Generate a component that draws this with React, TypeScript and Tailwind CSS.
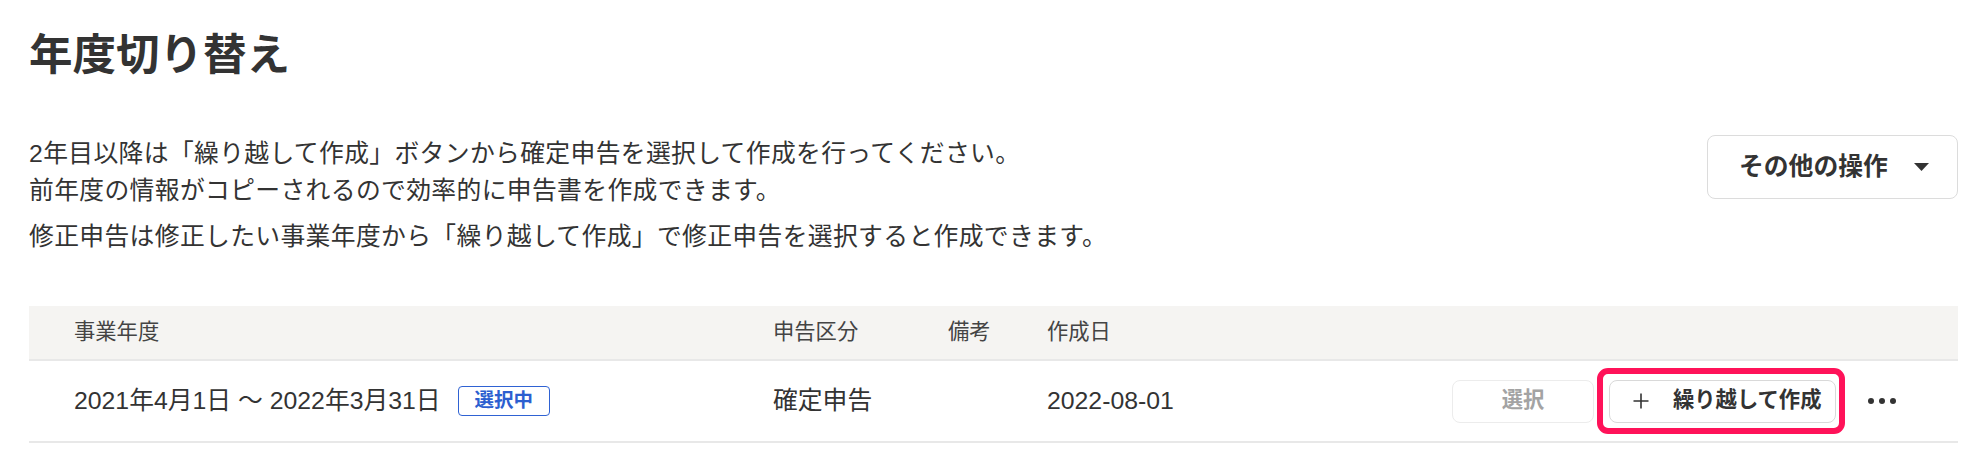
export default function App() {
  return (
    <div className="min-h-[450px] w-[1970px] bg-white pl-[29px] pr-[12px] font-['Liberation_Sans','Noto_Sans_CJK_JP',sans-serif] text-[#333]">
      <h1 className="pt-[25px] text-[43.5px] font-bold leading-[60px]">年度切り替え</h1>

      <div className="mt-[50px] flex items-start justify-between">
        <div className="text-[24.8px] leading-[37px] tracking-[0.35px]">
          <p>
            2年目以降は「繰り越して作成」ボタンから確定申告を選択して作成を行ってください。
            <br />
            前年度の情報がコピーされるので効率的に申告書を作成できます。
          </p>
          <p className="mt-[9px]">
            修正申告は修正したい事業年度から「繰り越して作成」で修正申告を選択すると作成できます。
          </p>
        </div>
        <button className="flex h-[64px] w-[251px] items-center rounded-[8px] border border-[#dcdcdc] bg-white pl-[31px] pr-[28px] text-[24.8px] font-bold text-[#333]">
          <span>その他の操作</span>
          <svg className="ml-auto" width="15" height="8" viewBox="0 0 15 8">
            <path d="M0 0H15L7.5 8Z" fill="#333" />
          </svg>
        </button>
      </div>

      <div className="mt-[51px]">
        <div className="flex h-[55px] items-center border-b-2 border-[#e8e8e8] bg-[#f5f4f2] pl-[45px] text-[21.3px] text-[#444]">
          <div className="w-[699px]">事業年度</div>
          <div className="w-[175px]">申告区分</div>
          <div className="w-[99px]">備考</div>
          <div className="flex-1">作成日</div>
        </div>

        <div className="flex h-[82px] items-center border-b-2 border-[#e8e8e8] pl-[45px] pr-[50px] text-[24.8px] text-[#333]">
          <div className="flex w-[699px] items-center">
            <span>2021年4月1日 〜 2022年3月31日</span>
            <span className="ml-[17px] flex h-[30px] w-[92px] items-center justify-center rounded-[4px] border-[1.5px] border-[#2f62d3] text-[19.5px] font-bold text-[#2c5fd0]">
              選択中
            </span>
          </div>
          <div className="w-[175px]">確定申告</div>
          <div className="w-[99px]"></div>
          <div className="flex-1">2022-08-01</div>

          <div className="flex items-center">
            <button className="flex h-[43px] w-[142px] items-center justify-center rounded-[8px] border border-[#ececec] bg-white text-[21.3px] font-bold text-[#a3a3a3]">
              選択
            </button>
            <div className="relative ml-[15px]">
              <button className="flex h-[43px] w-[227px] items-center rounded-[8px] border border-[#d9d9d9] bg-white pl-[23px] text-[21.3px] font-bold text-[#333]">
                <svg width="16" height="16" viewBox="0 0 16 16">
                  <path d="M8 0.5V15.5M0.5 8H15.5" stroke="#333" strokeWidth="1.6" fill="none" />
                </svg>
                <span className="ml-[24px]">繰り越して作成</span>
              </button>
              <span className="pointer-events-none absolute -top-[12px] -right-[9px] -bottom-[11px] -left-[12px] rounded-[11px] border-[6px] border-[#ff1259]"></span>
            </div>
            <button className="ml-[20px] flex h-[43px] w-[52px] items-center justify-center gap-[5px]">
              <span className="h-[6px] w-[6px] rounded-full bg-[#333]"></span>
              <span className="h-[6px] w-[6px] rounded-full bg-[#333]"></span>
              <span className="h-[6px] w-[6px] rounded-full bg-[#333]"></span>
            </button>
          </div>
        </div>
      </div>
    </div>
  );
}
